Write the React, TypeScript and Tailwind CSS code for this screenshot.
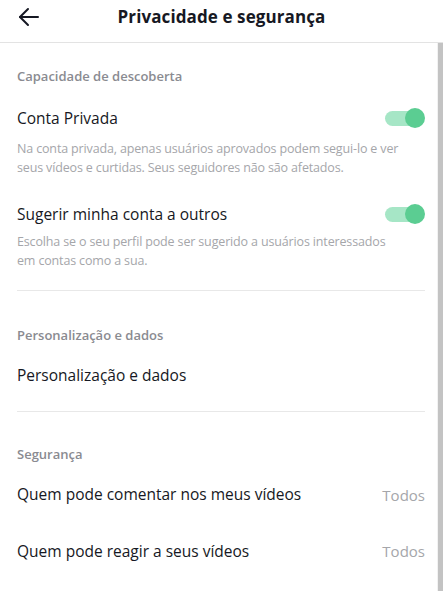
import React from "react";

function Toggle() {
  return (
    <div className="relative w-[40px] h-[20px] flex items-center shrink-0">
      <div className="w-[38px] h-[15px] rounded-full bg-[#a6e6c6]" />
      <div className="absolute right-0 top-0 w-[20px] h-[20px] rounded-full bg-[#5bcd92]" />
    </div>
  );
}

export default function App() {
  return (
    <div
      className="w-[443px] h-[591px] bg-white overflow-hidden flex flex-col"
      style={{ fontFamily: '"Open Sans", "Noto Sans", sans-serif' }}
    >
      <header className="h-[43px] shrink-0 relative flex items-center justify-center border-b border-[#e3e3e3]">
        <svg
          className="absolute left-[18px] top-[7px]"
          width="22"
          height="20"
          viewBox="0 0 22 20"
          fill="none"
          stroke="#161823"
          strokeWidth="2"
          strokeLinecap="round"
          strokeLinejoin="round"
        >
          <path d="M20 10H2" />
          <path d="M10 2L2 10l8 8" />
        </svg>
        <h1 className="text-[17px] font-bold text-[#161823] -mt-[9px] tracking-[0.1px]">
          Privacidade e segurança
        </h1>
      </header>
      <div className="flex-1 flex min-h-0">
        <div className="flex-1 flex flex-col pl-[17px] pr-[12px]">
          <div className="pt-[24px] text-[13px] font-semibold text-[#8a8b91]">
            Capacidade de descoberta
          </div>
          <div className="mt-[20px] flex items-center justify-between">
            <span className="text-[15.5px] text-[#161823]">Conta Privada</span>
            <Toggle />
          </div>
          <p className="mt-[9px] text-[12.5px] leading-[19px] tracking-[-0.15px] text-[#a5a6aa]">
            Na conta privada, apenas usuários aprovados podem segui-lo e ver seus vídeos e curtidas. Seus seguidores não são afetados.
          </p>
          <div className="mt-[26px] flex items-center justify-between">
            <span className="text-[15.5px] text-[#161823]">Sugerir minha conta a outros</span>
            <Toggle />
          </div>
          <p className="mt-[6px] pr-[24px] text-[12.5px] leading-[19px] tracking-[-0.15px] text-[#a5a6aa]">
            Escolha se o seu perfil pode ser sugerido a usuários interessados em contas como a sua.
          </p>
          <div className="mt-[20px] h-px bg-[#e8e8e8]" />
          <div className="pt-[35px] text-[13px] font-semibold text-[#8a8b91]">
            Personalização e dados
          </div>
          <div className="mt-[18px] text-[15.5px] text-[#161823]">Personalização e dados</div>
          <div className="mt-[24px] h-px bg-[#e8e8e8]" />
          <div className="pt-[33px] text-[13px] font-semibold text-[#8a8b91]">Segurança</div>
          <div className="mt-[19px] flex items-center justify-between">
            <span className="text-[15.5px] text-[#161823]">Quem pode comentar nos meus vídeos</span>
            <span className="text-[15px] text-[#a5a6aa]">Todos</span>
          </div>
          <div className="mt-[33px] flex items-center justify-between">
            <span className="text-[15.5px] text-[#161823]">Quem pode reagir a seus vídeos</span>
            <span className="text-[15px] text-[#a5a6aa]">Todos</span>
          </div>
        </div>
        <div className="w-[6px] shrink-0 bg-[#c3c3c3] border-l border-[#f2f2f2]" />
      </div>
    </div>
  );
}
